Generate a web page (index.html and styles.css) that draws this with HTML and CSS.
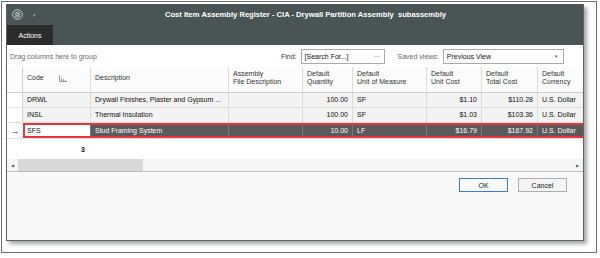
FILE: index.html
```html
<!DOCTYPE html>
<html lang="en">
<head>
  <meta charset="UTF-8" />
  <title>Cost Item Assembly Register</title>
  <link rel="stylesheet" href="styles.css">
</head>
<body>
  <div class="frame">
    <div class="dialog">
      <div class="titlebar">
        <div class="title-row">
          <svg class="logo" width="11" height="11" viewBox="0 0 11 11">
            <circle cx="5.5" cy="5.5" r="4.8" fill="none" stroke="#c9cfcf" stroke-width="1"/>
            <path d="M3 4.2 L6.5 2.6 M2.8 6 L8.2 3.6 M3 7.6 L8.3 5.3 M4.6 8.5 L8 7" stroke="#c9cfcf" stroke-width="1" fill="none"/>
          </svg>
          <span class="caret">&#9662;</span>
          <span class="title">Cost Item Assembly Register - CIA - Drywall Partition Assembly &nbsp;subassembly</span>
        </div>
        <div class="tab-row">
          <span class="tab">Actions</span>
        </div>
      </div>

      <div class="toolbar">
        <span class="group-hint">Drag columns here to group</span>
        <span class="label">Find:</span>
        <span class="search">[Search For...]<span class="dots">&middot;&middot;&middot;</span></span>
        <span class="label saved">Saved views:</span>
        <span class="select">Previous View<span class="arrow">&#9662;</span></span>
      </div>

      <div class="grid">
        <div class="row head">
          <div class="cell ind"></div>
          <div class="cell">Code
            <svg class="sort" width="8" height="7" viewBox="0 0 8 7">
              <path d="M0.5 0 V6.5 H8 M2.5 3 V6 M4.5 4 V6 M6.5 5 V6" stroke="#999" stroke-width="1" fill="none"/>
            </svg>
          </div>
          <div class="cell">Description</div>
          <div class="cell">Assembly<br>File Description</div>
          <div class="cell">Default<br>Quantity</div>
          <div class="cell">Default<br>Unit of Measure</div>
          <div class="cell">Default<br>Unit Cost</div>
          <div class="cell">Default<br>Total Cost</div>
          <div class="cell">Default<br>Currency</div>
        </div>
        <div class="row">
          <div class="cell ind"></div>
          <div class="cell">DRWL</div>
          <div class="cell">Drywall Finishes, Plaster and Gypsum ...</div>
          <div class="cell"></div>
          <div class="cell num">100.00</div>
          <div class="cell">SF</div>
          <div class="cell num">$1.10</div>
          <div class="cell num">$110.28</div>
          <div class="cell">U.S. Dollar</div>
        </div>
        <div class="row">
          <div class="cell ind"></div>
          <div class="cell">INSL</div>
          <div class="cell">Thermal Insulation</div>
          <div class="cell"></div>
          <div class="cell num">100.00</div>
          <div class="cell">SF</div>
          <div class="cell num">$1.03</div>
          <div class="cell num">$103.36</div>
          <div class="cell">U.S. Dollar</div>
        </div>
        <div class="row selected">
          <div class="cell ind">&rarr;</div>
          <div class="cell current">SFS</div>
          <div class="cell">Stud Framing System</div>
          <div class="cell"></div>
          <div class="cell num">10.00</div>
          <div class="cell">LF</div>
          <div class="cell num">$16.79</div>
          <div class="cell num">$167.92</div>
          <div class="cell">U.S. Dollar</div>
        </div>
      </div>

      <div class="summary">
        <span class="count">3</span>
      </div>

      <div class="hscroll">
        <span class="sb-arrow">&#9664;</span>
        <span class="thumb"></span>
        <span class="sb-arrow right">&#9654;</span>
      </div>

      <div class="buttons">
        <button class="btn ok">OK</button>
        <button class="btn">Cancel</button>
      </div>
    </div>
  </div>
</body>
</html>
```

FILE: styles.css
```css
body {
  margin: 0;
  background: #fff;
  font-family: "Liberation Sans", Arial, sans-serif;
  font-size: 7px;
  color: #222;
}
.frame {
  width: 596px;
  height: 252px;
  margin: 1px 0 0 1px;
  border: 1px solid #6d6d6d;
  box-sizing: border-box;
  padding: 2px 0 0 4px;
}
.dialog {
  width: 578px;
  height: 237px;
  display: flex;
  flex-direction: column;
  border: 1px solid #5e6565;
  border-top: none;
  box-sizing: border-box;
  background: #fff;
  box-shadow: 3px 3px 4px rgba(0,0,0,0.35);
  overflow: hidden;
}
.titlebar {
  background: #4a5455;
  height: 41px;
  flex: none;
  display: flex;
  flex-direction: column;
}
.title-row {
  height: 21px;
  display: flex;
  align-items: center;
  padding-left: 5px;
}
.caret {
  color: #a5adad;
  font-size: 5px;
  margin-left: 10px;
}
.title {
  color: #fff;
  font-weight: bold;
  font-size: 7.6px;
  margin-left: 129px;
}
.tab-row {
  height: 20px;
  display: flex;
}
.tab {
  width: 46px;
  background: #2c2c2c;
  color: #fff;
  display: flex;
  align-items: center;
  justify-content: center;
  font-size: 7px;
}
.toolbar {
  height: 22px;
  flex: none;
  display: flex;
  align-items: center;
  padding-left: 3px;
  color: #555;
}
.group-hint {
  color: #6a6a6a;
  width: 271px;
}
.label {
  color: #333;
  margin-right: 4px;
}
.label.saved {
  color: #666;
  margin-left: 13px;
}
.search, .select {
  height: 15px;
  border: 1px solid #aaa;
  box-sizing: border-box;
  display: flex;
  align-items: center;
  padding-left: 3px;
  color: #111;
}
.search { width: 84px; }
.select { width: 121px; }
.dots {
  margin-left: auto;
  margin-right: 4px;
  color: #666;
  letter-spacing: -0.5px;
}
.arrow {
  margin-left: auto;
  margin-right: 5px;
  font-size: 5px;
  color: #555;
}
.grid {
  flex: 1;
  border-bottom: 1px solid #e2e2e2;
}
.row {
  display: grid;
  grid-template-columns: 16px 68px 138px 74px 50px 74px 55px 56px 60px;
  height: 15px;
  background: #f3f3f3;
  border-bottom: 1px solid #e0e0e0;
  box-sizing: border-box;
  color: #111;
}
.row.head {
  height: 26px;
  background: #fcfcfc;
  border-bottom: 1px solid #cfcfcf;
  color: #333;
}
.cell {
  display: flex;
  align-items: center;
  padding: 0 4px;
  border-right: 1px solid #dcdcdc;
  white-space: nowrap;
  overflow: hidden;
  line-height: 8px;
}
.head .cell {
  white-space: normal;
  padding-bottom: 3px;
}
.cell.ind {
  background: #fff;
  border-right: 1px solid #d0d0d0;
  padding: 0;
  justify-content: center;
  color: #444;
  font-size: 9px;
}
.head .cell.ind { background: #fcfcfc; }
.cell.num {
  justify-content: flex-end;
}
.sort {
  margin-left: 15px;
}
.row.selected {
  background: #5a5a5a;
  color: #fff;
  border-bottom: none;
  position: relative;
}
.row.selected::after {
  content: "";
  position: absolute;
  left: 16px;
  right: -4px;
  top: 0;
  bottom: 0;
  border: 2px solid #e8343c;
  pointer-events: none;
}
.row.selected .cell { border-right-color: #777; }
.row.selected .cell.ind {
  background: #fff;
  border-right: none;
}
.row.selected .cell.current {
  background: #fff;
  color: #111;
}
.summary {
  height: 20px;
  flex: none;
  display: flex;
  align-items: center;
}
.count {
  font-weight: bold;
  width: 78px;
  text-align: right;
  color: #111;
}
.hscroll {
  height: 12px;
  flex: none;
  background: #f6f6f6;
  border-bottom: 1px solid #bdbdbd;
  display: flex;
  align-items: center;
}
.sb-arrow {
  width: 11px;
  text-align: center;
  font-size: 4px;
  color: #555;
}
.sb-arrow.right {
  margin-left: auto;
}
.thumb {
  width: 125px;
  height: 100%;
  background: #d8d8d8;
}
.buttons {
  flex: 1;
  background: #f8f8f8;
  display: flex;
  justify-content: flex-end;
  align-items: flex-start;
  padding: 6px 16px 0 0;
  gap: 10px;
}
.btn {
  width: 49px;
  height: 14px;
  padding: 0;
  font-family: "Liberation Sans", Arial, sans-serif;
  font-size: 7px;
  color: #222;
  background: #f4f4f4;
  border: 1px solid #adadad;
  box-sizing: border-box;
}
.btn.ok {
  border: 1px solid #3d7cc9;
  background: #f9f9f9;
}
```
